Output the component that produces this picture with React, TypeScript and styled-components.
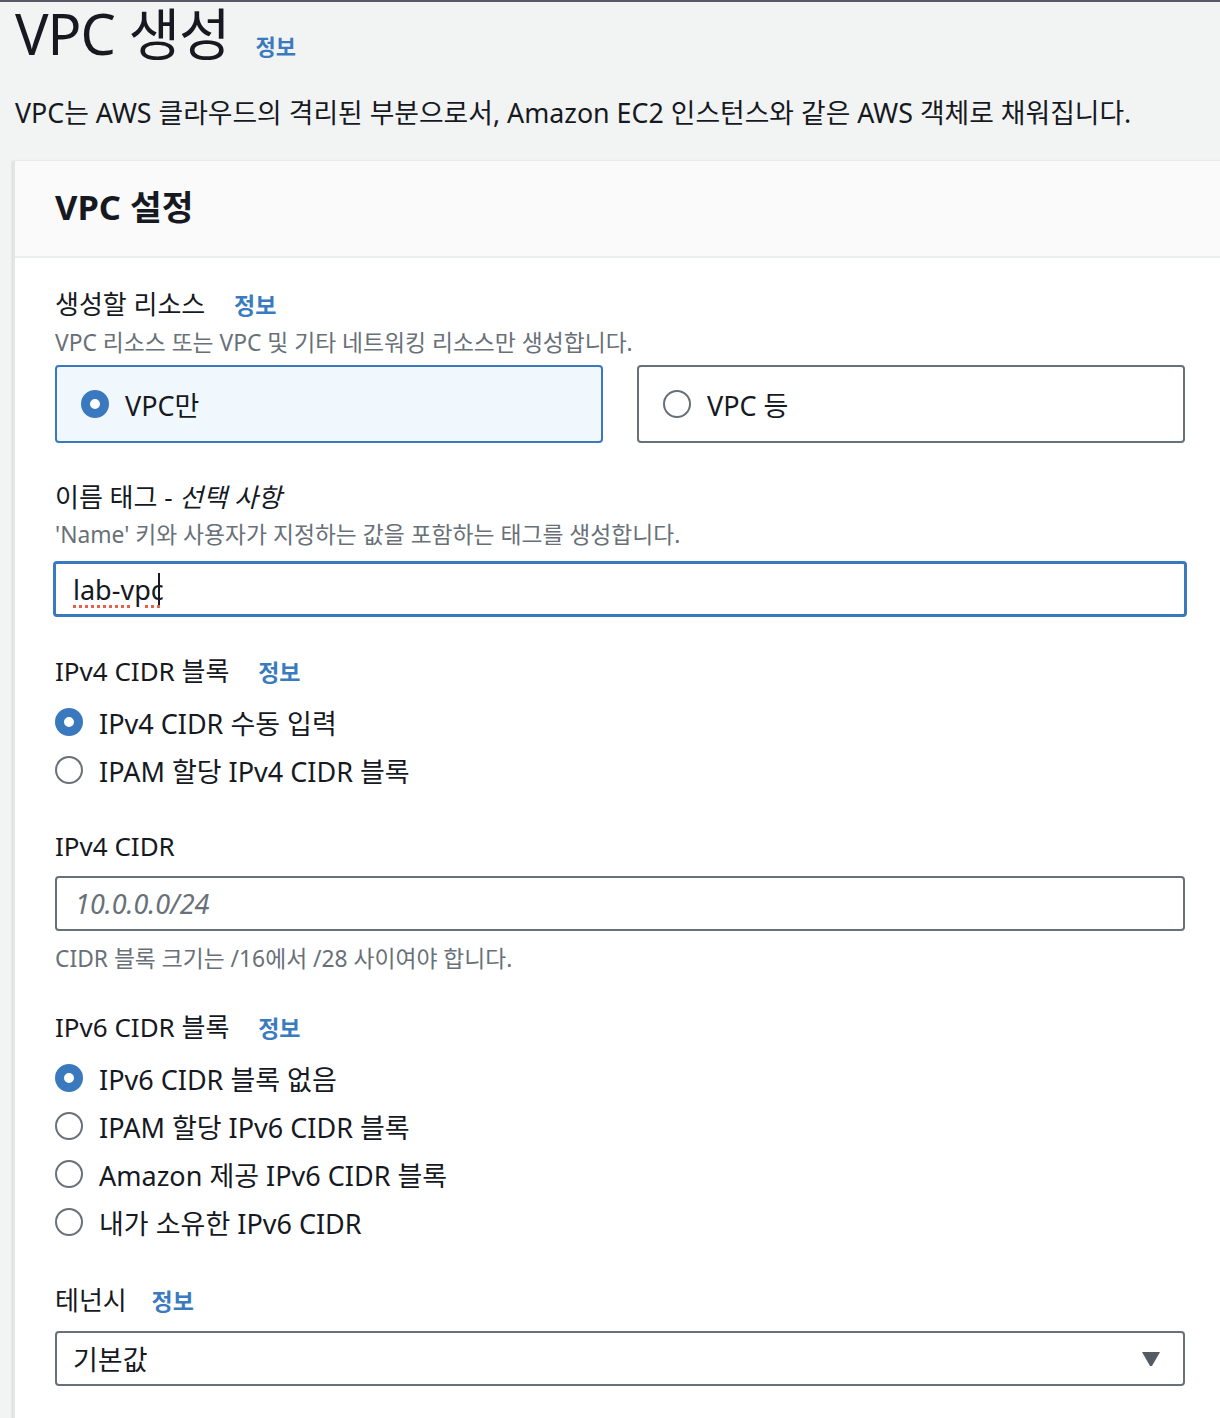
import styled, { createGlobalStyle } from 'styled-components'

const GlobalStyle = createGlobalStyle`
  html, body {
    margin: 0;
    padding: 0;
    background: #f2f3f3;
    font-family: "Noto Sans", "Noto Sans CJK KR", sans-serif;
    color: #16191f;
  }
  #root {
    overflow: hidden;
  }
`

type Option = {
  label: string
  checked?: boolean
}

const ipv4Options: Option[] = [
  { label: 'IPv4 CIDR 수동 입력', checked: true },
  { label: 'IPAM 할당 IPv4 CIDR 블록' },
]

const ipv6Options: Option[] = [
  { label: 'IPv6 CIDR 블록 없음', checked: true },
  { label: 'IPAM 할당 IPv6 CIDR 블록' },
  { label: 'Amazon 제공 IPv6 CIDR 블록' },
  { label: '내가 소유한 IPv6 CIDR' },
]

const RadioGroup = ({ options }: { options: Option[] }) => (
  <RadioList>
    {options.map(option => (
      <RadioRow key={option.label}>
        <RadioDot $checked={option.checked} />
        <RadioText>{option.label}</RadioText>
      </RadioRow>
    ))}
  </RadioList>
)

const App = () => {
  return (
    <>
      <GlobalStyle />
      <Page>
        <PageHeader>
          <PageTitle>VPC 생성</PageTitle>
          <HeaderInfo>정보</HeaderInfo>
        </PageHeader>
        <PageDescription>
          VPC는 AWS 클라우드의 격리된 부분으로서, Amazon EC2 인스턴스와 같은 AWS 객체로 채워집니다.
        </PageDescription>

        <Panel>
          <PanelHeader>
            <PanelTitle>VPC 설정</PanelTitle>
          </PanelHeader>
          <PanelBody>
            <Field $gap={6}>
              <LabelBlock>
                <Label>
                  생성할 리소스 <InfoLink>정보</InfoLink>
                </Label>
                <Hint>VPC 리소스 또는 VPC 및 기타 네트워킹 리소스만 생성합니다.</Hint>
              </LabelBlock>
              <TileGrid>
                <Tile $selected>
                  <RadioDot $checked />
                  <TileText>VPC만</TileText>
                </Tile>
                <Tile>
                  <RadioDot />
                  <TileText>VPC 등</TileText>
                </Tile>
              </TileGrid>
            </Field>

            <Field $gap={10}>
              <LabelBlock>
                <Label>
                  이름 태그 - <em>선택 사항</em>
                </Label>
                <Hint>'Name' 키와 사용자가 지정하는 값을 포함하는 태그를 생성합니다.</Hint>
              </LabelBlock>
              <TextBox $focused>
                <Misspelled>lab-vpc</Misspelled>
                <Caret />
              </TextBox>
            </Field>

            <Field $gap={8}>
              <Label>
                IPv4 CIDR 블록 <InfoLink>정보</InfoLink>
              </Label>
              <RadioGroup options={ipv4Options} />
            </Field>

            <Field $gap={12} $top={34}>
              <Label>IPv4 CIDR</Label>
              <TextBox>
                <Placeholder>10.0.0.0/24</Placeholder>
              </TextBox>
              <Hint>CIDR 블록 크기는 /16에서 /28 사이여야 합니다.</Hint>
            </Field>

            <Field $gap={8} $top={34}>
              <Label>
                IPv6 CIDR 블록 <InfoLink>정보</InfoLink>
              </Label>
              <RadioGroup options={ipv6Options} />
            </Field>

            <Field $gap={12} $top={36}>
              <Label>
                테넌시 <InfoLink $gap={18}>정보</InfoLink>
              </Label>
              <SelectBox>
                <span>기본값</span>
                <svg viewBox="0 0 20 16" width={20} height={16}>
                  <path d="M1 1h18l-8 14h-2z" fill="#545b64" />
                </svg>
              </SelectBox>
            </Field>
          </PanelBody>
        </Panel>
      </Page>
    </>
  )
}

export default App

const Page = styled.div`
  border-top: 2px solid #545b64;
  min-height: 1416px;
  padding-left: 13px;
`

const PageHeader = styled.div`
  display: flex;
  align-items: baseline;
  gap: 26px;
  padding: 1px 0 0 2px;
  height: 69px;
`

const PageTitle = styled.h1`
  margin: 0;
  font-size: 56px;
  line-height: 60px;
  font-weight: 400;
  letter-spacing: -1px;
`

const InfoLink = styled.span<{ $gap?: number }>`
  font-size: 23px;
  font-weight: 700;
  color: #3a7bbf;
  margin-left: ${props => props.$gap ?? 22}px;
`

const HeaderInfo = styled(InfoLink)`
  font-size: 22px;
  margin-left: 0;
`

const PageDescription = styled.p`
  margin: 22px 0 29px 2px;
  font-size: 26.8px;
  line-height: 38px;
  white-space: nowrap;
`

const Panel = styled.section`
  background: #fff;
  border-left: 2px solid #e4e6e6;
  box-shadow: -1px 0 2px rgba(0, 22, 40, 0.12);
  margin-right: -20px;
`

const PanelHeader = styled.div`
  box-sizing: border-box;
  height: 97px;
  display: flex;
  align-items: center;
  padding: 0 0 8px 40px;
  background: #fafafa;
  border-bottom: 2px solid #eaeded;
`

const PanelTitle = styled.h2`
  margin: 0;
  font-size: 34.5px;
  font-weight: 700;
`

const PanelBody = styled.div`
  padding: 28px 55px 40px 40px;
  display: flex;
  flex-direction: column;
`

const Field = styled.div<{ $gap: number; $top?: number }>`
  display: flex;
  flex-direction: column;
  gap: ${props => props.$gap}px;
  margin-top: ${props => props.$top ?? 36}px;
  &:first-child {
    margin-top: 0;
  }
`

const LabelBlock = styled.div`
  display: flex;
  flex-direction: column;
  gap: 4px;
`

const Label = styled.div`
  font-size: 26px;
  line-height: 36px;
  em {
    font-style: italic;
  }
`

const Hint = styled.div`
  font-size: 22.8px;
  line-height: 32px;
  color: #687078;
`

const TileGrid = styled.div`
  display: grid;
  grid-template-columns: 1fr 1fr;
  gap: 34px;
`

const Tile = styled.div<{ $selected?: boolean }>`
  box-sizing: border-box;
  display: flex;
  align-items: center;
  gap: 16px;
  height: 78px;
  padding: 0 24px;
  border: 2px solid ${props => (props.$selected ? '#3b79bf' : '#687078')};
  border-radius: 4px;
  background: ${props => (props.$selected ? '#f1f8fd' : '#fff')};
`

const TileText = styled.span`
  font-size: 27px;
`

const RadioDot = styled.span<{ $checked?: boolean }>`
  box-sizing: border-box;
  flex: none;
  width: 28px;
  height: 28px;
  border-radius: 50%;
  border: ${props => (props.$checked ? '9px solid #3b79bf' : '2px solid #687078')};
  background: #fff;
`

const RadioList = styled.div`
  display: flex;
  flex-direction: column;
`

const RadioRow = styled.div`
  display: flex;
  align-items: center;
  gap: 16px;
  height: 48px;
`

const RadioText = styled.span`
  font-size: 27px;
`

const TextBox = styled.div<{ $focused?: boolean }>`
  display: flex;
  align-items: center;
  height: ${props => (props.$focused ? 50 : 51)}px;
  margin: ${props => (props.$focused ? '0 -2px' : '0')};
  padding: 0 ${props => (props.$focused ? 17 : 18)}px;
  border: ${props => (props.$focused ? '3px solid #3b79bf' : '2px solid #687078')};
  border-radius: 4px;
  background: #fff;
  font-size: 27px;
`

const Misspelled = styled.span`
  text-decoration: underline dotted #e8604c;
  text-decoration-thickness: 3px;
  text-underline-offset: 5px;
`

const Caret = styled.span`
  display: inline-block;
  width: 2px;
  height: 32px;
  margin-left: -6px;
  background: #16191f;
`

const Placeholder = styled.span`
  color: #687078;
  font-style: italic;
`

const SelectBox = styled.div`
  display: flex;
  align-items: center;
  justify-content: space-between;
  height: 51px;
  padding: 0 22px 0 16px;
  border: 2px solid #687078;
  border-radius: 4px;
  font-size: 27px;
`
